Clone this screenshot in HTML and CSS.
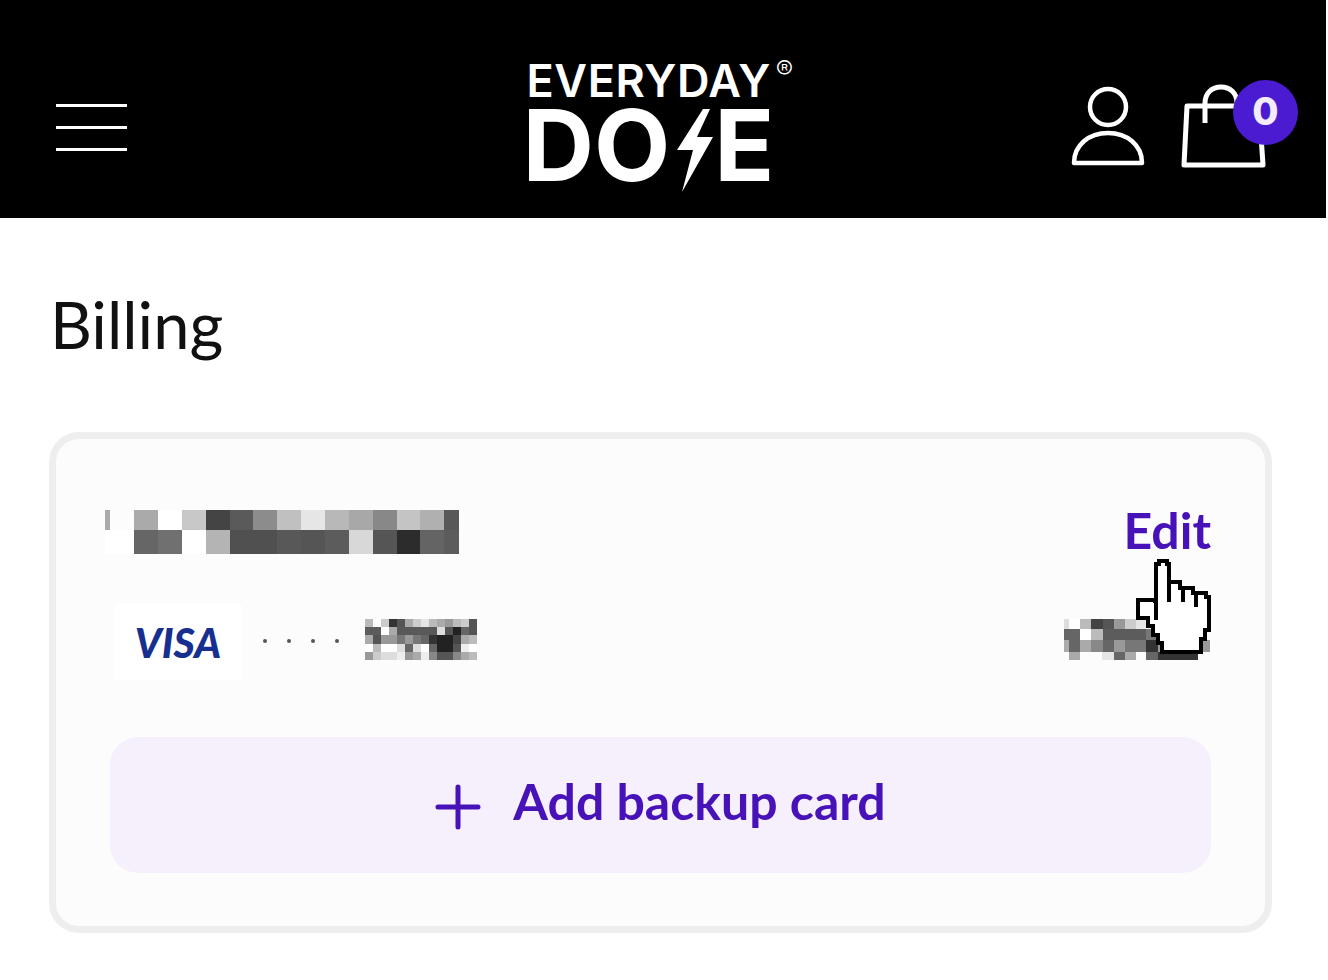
FILE: index.html
```html
<!DOCTYPE html>
<html lang="en">
<head>
  <meta charset="UTF-8">
  <title>Billing</title>
  <link rel="stylesheet" href="styles.css">
</head>
<body>

  <header class="topbar">
    <div class="burger">
      <span class="burger-line"></span>
      <span class="burger-line"></span>
      <span class="burger-line"></span>
    </div>

    <div class="logo">
      <div class="logo-top">EVERYDAY<span class="logo-reg">®</span></div>
      <div class="logo-bottom">
        <span class="logo-do">DO</span>
        <svg class="bolt" viewBox="0 0 36 83">
          <polygon points="26,0 33,0 20,28 36,28 5,83 16,41 0,41"/>
        </svg>
        <span>E</span>
      </div>
    </div>

    <div class="topbar-icons">
      <svg class="icon-user" viewBox="0 0 74 80" fill="none" stroke="#fff" stroke-width="4.5" stroke-linejoin="round">
        <circle cx="37" cy="21" r="18"/>
        <path d="M3 77c0-18 15-30 34-30s34 12 34 30z"/>
      </svg>
      <div class="cart">
        <svg class="icon-bag" viewBox="0 0 86 86" fill="none" stroke="#fff" stroke-width="5" stroke-linejoin="round">
          <path d="M6 22h72l4 59H3z"/>
          <path d="M24 39V19C24 9 31 3 40 3s16 6 16 16"/>
        </svg>
        <span class="badge">0</span>
      </div>
    </div>
  </header>

  <main class="content">
    <h1 class="title">Billing</h1>

    <section class="card">
      <div class="card-row">
        <svg class="blur blur-name" viewBox="0 0 354 44" shape-rendering="crispEdges">
          <rect x="0" y="0" width="5" height="20" fill="#aaa"/>
          <rect x="0" y="20" width="29" height="24" fill="#fff"/>
          <rect x="29" y="0" width="24" height="20" fill="#aaa"/>
          <rect x="53" y="0" width="24" height="20" fill="#fff"/>
          <rect x="77" y="0" width="24" height="20" fill="#c8c8c8"/>
          <rect x="101" y="0" width="24" height="20" fill="#444"/>
          <rect x="125" y="0" width="24" height="20" fill="#5a5a5a"/>
          <rect x="148" y="0" width="24" height="20" fill="#8c8c8c"/>
          <rect x="172" y="0" width="24" height="20" fill="#c0c0c0"/>
          <rect x="196" y="0" width="24" height="20" fill="#e6e6e6"/>
          <rect x="220" y="0" width="24" height="20" fill="#b8b8b8"/>
          <rect x="244" y="0" width="24" height="20" fill="#a8a8a8"/>
          <rect x="268" y="0" width="24" height="20" fill="#888"/>
          <rect x="292" y="0" width="23" height="20" fill="#c4c4c4"/>
          <rect x="315" y="0" width="24" height="20" fill="#b0b0b0"/>
          <rect x="339" y="0" width="15" height="20" fill="#585858"/>
          <rect x="29" y="20" width="24" height="24" fill="#666"/>
          <rect x="53" y="20" width="24" height="24" fill="#707070"/>
          <rect x="77" y="20" width="24" height="24" fill="#fff"/>
          <rect x="101" y="20" width="24" height="24" fill="#b4b4b4"/>
          <rect x="125" y="20" width="48" height="24" fill="#505050"/>
          <rect x="172" y="20" width="24" height="24" fill="#585858"/>
          <rect x="196" y="20" width="24" height="24" fill="#555"/>
          <rect x="220" y="20" width="24" height="24" fill="#5c5c5c"/>
          <rect x="244" y="20" width="24" height="24" fill="#d8d8d8"/>
          <rect x="268" y="20" width="24" height="24" fill="#555"/>
          <rect x="292" y="20" width="23" height="24" fill="#2c2c2c"/>
          <rect x="315" y="20" width="24" height="24" fill="#646464"/>
          <rect x="339" y="20" width="15" height="24" fill="#5c5c5c"/>
        </svg>
        <a class="edit">Edit</a>
      </div>

      <div class="card-row card-row-pay">
        <div class="pay-left">
          <div class="visa-box"><span class="visa">VISA</span></div>
          <div class="dots">
            <span class="dot"></span>
            <span class="dot"></span>
            <span class="dot"></span>
            <span class="dot"></span>
          </div>
          <svg class="blur blur-num" viewBox="0 0 14 5" shape-rendering="crispEdges" preserveAspectRatio="none">
            <rect x="0" y="0" width="1" height="1" fill="#bbb"/><rect x="1" y="0" width="1" height="1" fill="#fff"/><rect x="2" y="0" width="1" height="1" fill="#ccc"/><rect x="3" y="0" width="1" height="1" fill="#333"/><rect x="4" y="0" width="1" height="1" fill="#555"/><rect x="5" y="0" width="1" height="1" fill="#aaa"/><rect x="6" y="0" width="1" height="1" fill="#ccc"/><rect x="7" y="0" width="1" height="1" fill="#e5e5e5"/><rect x="8" y="0" width="1" height="1" fill="#bbb"/><rect x="9" y="0" width="1" height="1" fill="#aaa"/><rect x="10" y="0" width="1" height="1" fill="#999"/><rect x="11" y="0" width="1" height="1" fill="#bbb"/><rect x="12" y="0" width="1" height="1" fill="#ccc"/><rect x="13" y="0" width="1" height="1" fill="#555"/>
            <rect x="0" y="1" width="2" height="1" fill="#5c5c5c"/><rect x="2" y="1" width="1" height="1" fill="#fff"/><rect x="3" y="1" width="1" height="1" fill="#aaa"/><rect x="4" y="1" width="5" height="1" fill="#595959"/><rect x="9" y="1" width="1" height="1" fill="#ddd"/><rect x="10" y="1" width="1" height="1" fill="#555"/><rect x="11" y="1" width="1" height="1" fill="#222"/><rect x="12" y="1" width="1" height="1" fill="#666"/><rect x="13" y="1" width="1" height="1" fill="#555"/>
            <rect x="0" y="2" width="1" height="1" fill="#aaa"/><rect x="1" y="2" width="1" height="1" fill="#555"/><rect x="2" y="2" width="2" height="1" fill="#999"/><rect x="4" y="2" width="1" height="1" fill="#777"/><rect x="5" y="2" width="1" height="1" fill="#999"/><rect x="6" y="2" width="1" height="1" fill="#777"/><rect x="7" y="2" width="1" height="1" fill="#666"/><rect x="8" y="2" width="1" height="1" fill="#333"/><rect x="9" y="2" width="2" height="1" fill="#222"/><rect x="11" y="2" width="1" height="1" fill="#444"/><rect x="12" y="2" width="1" height="1" fill="#aaa"/><rect x="13" y="2" width="1" height="1" fill="#bbb"/>
            <rect x="0" y="3" width="1" height="1" fill="#fff"/><rect x="1" y="3" width="1" height="1" fill="#bbb"/><rect x="2" y="3" width="2" height="1" fill="#fff"/><rect x="4" y="3" width="1" height="1" fill="#ddd"/><rect x="5" y="3" width="1" height="1" fill="#666"/><rect x="6" y="3" width="1" height="1" fill="#ddd"/><rect x="7" y="3" width="1" height="1" fill="#fff"/><rect x="8" y="3" width="1" height="1" fill="#666"/><rect x="9" y="3" width="2" height="1" fill="#222"/><rect x="11" y="3" width="1" height="1" fill="#555"/><rect x="12" y="3" width="1" height="1" fill="#eee"/><rect x="13" y="3" width="1" height="1" fill="#fff"/>
            <rect x="0" y="4" width="1" height="1" fill="#999"/><rect x="1" y="4" width="1" height="1" fill="#ccc"/><rect x="2" y="4" width="2" height="1" fill="#ddd"/><rect x="4" y="4" width="1" height="1" fill="#eee"/><rect x="5" y="4" width="1" height="1" fill="#999"/><rect x="6" y="4" width="1" height="1" fill="#aaa"/><rect x="7" y="4" width="1" height="1" fill="#eee"/><rect x="8" y="4" width="1" height="1" fill="#888"/><rect x="9" y="4" width="2" height="1" fill="#555"/><rect x="11" y="4" width="1" height="1" fill="#888"/><rect x="12" y="4" width="1" height="1" fill="#aaa"/><rect x="13" y="4" width="1" height="1" fill="#bbb"/>
          </svg>
        </div>
        <svg class="blur blur-exp" viewBox="0 0 146 41" shape-rendering="crispEdges">
          <rect x="0" y="0" width="5" height="10" fill="#ddd"/><rect x="5" y="0" width="11" height="10" fill="#fff"/><rect x="16" y="0" width="11" height="10" fill="#bbb"/><rect x="27" y="0" width="12" height="10" fill="#444"/><rect x="39" y="0" width="11" height="10" fill="#555"/><rect x="50" y="0" width="11" height="10" fill="#999"/><rect x="61" y="0" width="11" height="10" fill="#ccc"/><rect x="72" y="0" width="10" height="10" fill="#e5e5e5"/>
          <rect x="0" y="10" width="16" height="11" fill="#666"/><rect x="16" y="10" width="11" height="11" fill="#fff"/><rect x="27" y="10" width="12" height="11" fill="#bbb"/><rect x="39" y="10" width="43" height="11" fill="#5c5c5c"/><rect x="82" y="10" width="12" height="11" fill="#777"/>
          <rect x="0" y="21" width="5" height="12" fill="#aaa"/><rect x="5" y="21" width="11" height="12" fill="#666"/><rect x="16" y="21" width="11" height="12" fill="#aaa"/><rect x="27" y="21" width="12" height="12" fill="#888"/><rect x="39" y="21" width="11" height="12" fill="#666"/><rect x="50" y="21" width="11" height="12" fill="#999"/><rect x="61" y="21" width="21" height="12" fill="#777"/><rect x="82" y="21" width="12" height="12" fill="#333"/><rect x="94" y="21" width="52" height="12" fill="#999"/>
          <rect x="5" y="33" width="11" height="8" fill="#aaa"/><rect x="38" y="33" width="12" height="8" fill="#e5e5e5"/><rect x="50" y="33" width="11" height="8" fill="#666"/><rect x="61" y="33" width="11" height="8" fill="#aaa"/><rect x="82" y="33" width="12" height="8" fill="#666"/><rect x="94" y="33" width="40" height="8" fill="#333"/>
        </svg>
      </div>

      <button class="add-btn">
        <svg class="plus" viewBox="0 0 46 46" fill="none" stroke="#4712b8" stroke-width="5" stroke-linecap="round">
          <path d="M3 23h40M23 3v40"/>
        </svg>
        Add backup card
      </button>
    </section>
  </main>

  <svg class="cursor" viewBox="0 0 80 98" shape-rendering="crispEdges">
    <path d="M21 42V6h3V3h8v3h2v18h11v6h13v5h3v-0h10v4h3v33h-4v9h-4v13H27v-9h-4v-8h-5v-9h-5v-8H3V42h15l3 2z" fill="#fff" stroke="#000" stroke-width="4.5"/>
    <path d="M34 24v20M48 30v14M61 35v14M21 44v18" fill="none" stroke="#000" stroke-width="4.5"/>
  </svg>

</body>
</html>
```

FILE: styles.css
```css
html, body {
  margin: 0;
  padding: 0;
}

body {
  position: relative;
  width: 1326px;
  height: 980px;
  overflow: hidden;
  background: #fff;
  font-family: 'Lato', sans-serif;
  color: #111;
}

.topbar {
  height: 218px;
  background: #000;
  display: flex;
  align-items: center;
  justify-content: space-between;
  padding: 0 59px 0 56px;
  box-sizing: border-box;
}

.burger {
  width: 71px;
  display: flex;
  flex-direction: column;
  gap: 19px;
  margin-top: 37px;
}

.burger-line {
  height: 3px;
  background: #fff;
}

.logo {
  color: #fff;
  width: 270px;
  margin-left: 125px;
  margin-top: 25px;
  font-family: 'Inter', sans-serif;
  font-weight: 700;
}

.logo-top {
  font-size: 45px;
  line-height: 44px;
  font-weight: 600;
  letter-spacing: 0.6px;
  display: flex;
  align-items: flex-start;
}

.logo-reg {
  font-size: 26px;
  line-height: 22px;
  font-weight: 300;
  margin-left: 5px;
}

.logo-bottom {
  display: flex;
  align-items: flex-start;
  font-size: 99px;
  line-height: 80px;
  height: 80px;
  margin-top: 2px;
}

.logo-do {
  margin-left: -4px;
}

.bolt {
  width: 36px;
  height: 83px;
  fill: #fff;
  margin: 4px 1px 0 7px;
}

.topbar-icons {
  display: flex;
  align-items: flex-start;
  gap: 36px;
  margin-top: 36px;
}

.icon-user {
  width: 74px;
  height: 80px;
  margin-top: 2px;
}

.cart {
  position: relative;
  width: 86px;
  height: 86px;
}

.icon-bag {
  width: 86px;
  height: 86px;
}

.badge {
  position: absolute;
  left: 52px;
  top: -4px;
  width: 65px;
  height: 65px;
  box-sizing: border-box;
  padding-bottom: 4px;
  border-radius: 50%;
  background: #4a1bd0;
  color: #f3ecff;
  font-size: 38px;
  font-weight: 800;
  font-family: 'Inter', sans-serif;
  display: flex;
  align-items: center;
  justify-content: center;
}

.content {
  padding: 0 54px 0 49px;
}

.title {
  margin: 68px 0 0 1px;
  font-size: 65px;
  line-height: 76px;
  font-weight: 400;
}

.card {
  margin-top: 70px;
  height: 501px;
  box-sizing: border-box;
  border: 7px solid #eeeeee;
  border-radius: 30px;
  background: #fcfcfc;
  padding: 71px 54px 0 54px;
  display: flex;
  flex-direction: column;
}

.card-row {
  display: flex;
  justify-content: space-between;
  align-items: center;
}

.blur {
  display: block;
}

.blur-name {
  width: 354px;
  height: 44px;
  margin-left: -5px;
}

.edit {
  font-size: 50px;
  font-weight: 700;
  color: #4712b8;
  line-height: 40px;
  margin-bottom: 4px;
}

.card-row-pay {
  margin-top: 50px;
}

.pay-left {
  display: flex;
  align-items: center;
  margin-left: 4px;
}

.visa-box {
  width: 128px;
  height: 76px;
  background: #fff;
  border-radius: 4px;
  display: flex;
  align-items: center;
  justify-content: center;
}

.visa {
  font-style: italic;
  font-weight: 900;
  font-size: 41px;
  color: #17308f;
}

.dots {
  display: flex;
  gap: 20px;
  margin: 0 0 2px 21px;
  width: 102px;
}

.dot {
  width: 4px;
  height: 4px;
  border-radius: 50%;
  background: #555;
}

.blur-num {
  width: 112px;
  height: 41px;
  margin-bottom: 5px;
}

.blur-exp {
  width: 146px;
  height: 41px;
  margin: 0 1px 5px 0;
}

.add-btn {
  margin-top: 57px;
  height: 136px;
  padding: 0 0 8px;
  border: none;
  border-radius: 28px;
  background: #f6f0fd;
  color: #4712b8;
  font-family: 'Lato', sans-serif;
  font-size: 50px;
  font-weight: 700;
  display: flex;
  align-items: center;
  justify-content: center;
  gap: 32px;
}

.plus {
  width: 46px;
  height: 46px;
  margin-top: 12px;
}

/* mouse pointer sits over the card */
.cursor {
  position: absolute;
  left: 1135px;
  top: 558px;
  width: 80px;
  height: 98px;
}
```
